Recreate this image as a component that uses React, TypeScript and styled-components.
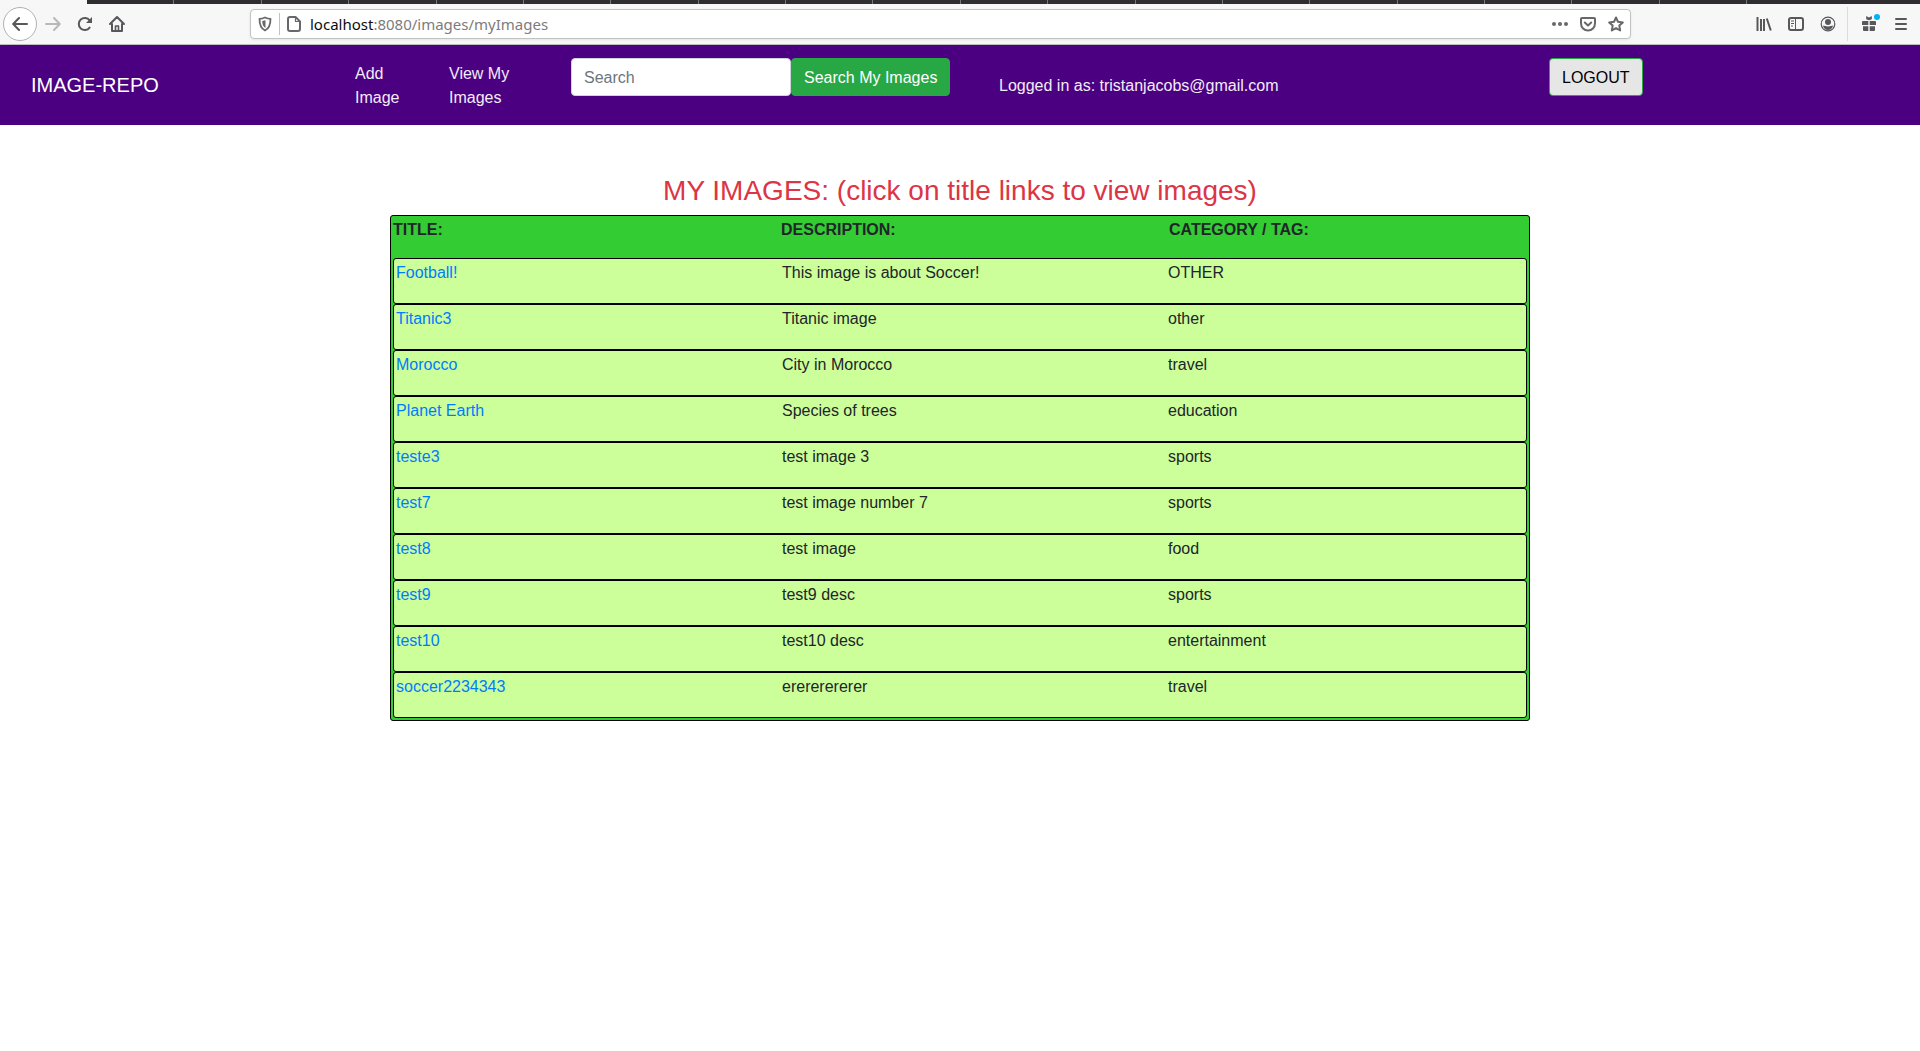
import React from "react";
import styled, { createGlobalStyle } from "styled-components";

const GlobalStyle = createGlobalStyle`
  *, *::before, *::after { box-sizing: border-box; }
  body {
    margin: 0;
    background: #fff;
    color: #212529;
    font: 400 16px/24px "Liberation Sans", Arial, sans-serif;
  }
`;

/* ---------- browser chrome ---------- */

const TabStrip = styled.div`
  display: flex;
  height: 4px;
  padding-right: 9%;
  background: #2f2d2f;
`;

const ActiveTab = styled.span`
  flex: 0 0 87px;
  background: #f7f7f8;
`;

const BackgroundTab = styled.span`
  flex: 1;
  border-right: 1px solid #77767a;
`;

const Toolbar = styled.div`
  display: flex;
  align-items: center;
  height: 41px;
  padding-left: 3px;
  padding-right: 3px;
  background: #f7f7f8;
  border-bottom: 1px solid #bdbdbd;
`;

const ToolButton = styled.button<{ $faded?: boolean }>`
  position: relative;
  display: grid;
  place-items: center;
  flex: none;
  width: 32px;
  height: 32px;
  padding: 0;
  border: 0;
  background: none;
  color: ${(p) => (p.$faded ? "#b9b9ba" : "#58585a")};
`;

const BackButton = styled(ToolButton)`
  width: 34px;
  height: 34px;
  border: 1px solid #b1b1b3;
  border-radius: 50%;
  background: #fff;
`;

const NotificationDot = styled.span`
  position: absolute;
  top: 6px;
  right: 5px;
  width: 6px;
  height: 6px;
  border-radius: 50%;
  background: #00b3f4;
`;

const AddressBar = styled.div`
  display: flex;
  align-items: center;
  flex: 1;
  height: 30px;
  margin-left: 117px;
  margin-right: 117px;
  border: 1px solid #c2c2c3;
  border-radius: 4px;
  background: #fff;
  box-shadow: 0 1px 3px rgba(0, 0, 0, 0.08);
`;

const BarButton = styled(ToolButton)`
  width: 28px;
  height: 28px;
  color: #68686a;
`;

const Divider = styled.span<{ $tall?: boolean }>`
  flex: none;
  width: 1px;
  height: ${(p) => (p.$tall ? 34 : 22)}px;
  margin: ${(p) => (p.$tall ? "0 5px 0 3px" : "0")};
  background: ${(p) => (p.$tall ? "#dcdcdd" : "#c2c2c3")};
`;

const Url = styled.span`
  flex: 1;
  margin-left: 2px;
  color: #7c7c7d;
  font: 400 15px/24px "Noto Sans", "Open Sans", sans-serif;
`;

const Host = styled.span`
  color: #0c0c0d;
`;

/* ---------- site header ---------- */

const Navbar = styled.nav`
  display: grid;
  grid-template-columns: 324fr 216fr 428fr 550fr 371fr;
  align-items: center;
  padding: 8px 0 8px 31px;
  background: #4b0082;
  color: #f2ecf7;
`;

const Brand = styled.a`
  color: #fff;
  font-size: 20px;
  line-height: 30px;
  text-decoration: none;
`;

const NavLinks = styled.ul`
  display: flex;
  gap: 30px;
  margin: 0;
  padding: 0;
  list-style: none;
`;

const NavLink = styled.a`
  display: block;
  width: 64px;
  padding: 9px 0 7px;
  color: inherit;
  text-decoration: none;
`;

const SearchForm = styled.form`
  display: flex;
  margin-bottom: 16px;
`;

const SearchInput = styled.input`
  width: 220px;
  height: 38px;
  padding: 7px 12px 5px;
  border: 1px solid #ced4da;
  border-radius: 4px;
  background: #fff;
  color: #495057;
  font: inherit;

  &::placeholder {
    color: #6c757d;
    opacity: 1;
  }
`;

const Button = styled.button<{ $light?: boolean }>`
  height: 38px;
  padding: 7px 12px 5px;
  border: 1px solid #28a745;
  border-radius: 4px;
  background: ${(p) => (p.$light ? "#e6e6e6" : "#28a745")};
  color: ${(p) => (p.$light ? "#000" : "#fff")};
  font: inherit;
  white-space: nowrap;
`;

const LogoutForm = styled.form`
  margin-bottom: 16px;
`;

const LoggedIn = styled.span`
  padding-top: 2px;
`;

/* ---------- image list ---------- */

const Main = styled.main`
  max-width: 1140px;
  margin: 0 auto;
  padding-top: 50px;
`;

const Heading = styled.h3`
  margin: 0 0 8px;
  color: #dc3545;
  font-size: 28px;
  font-weight: 400;
  line-height: 32px;
  text-align: center;
`;

const ImageTable = styled.table`
  display: block;
  padding: 2px;
  border: 1px solid #000;
  border-radius: 3px;
  background: #33cc33;

  thead,
  tbody {
    display: block;
  }
`;

const HeadRow = styled.tr`
  display: grid;
  grid-template-columns: repeat(3, 1fr);
  column-gap: 30px;
`;

const ImageRow = styled(HeadRow)`
  padding: 2px;
  border: 1px solid #000;
  border-radius: 3px;
  background: #ccff99;
`;

const HeadCell = styled.th`
  padding: 0 0 16px;
  text-align: left;
`;

const Cell = styled.td`
  padding: 0 0 16px;
`;

const TitleLink = styled.a`
  color: #007bff;
  text-decoration: none;
`;

/* ---------- icons ---------- */

type IconProps = { children: React.ReactNode; size?: number };

const Icon = ({ children, size = 16 }: IconProps) => (
  <svg
    width={size}
    height={size}
    viewBox="0 0 16 16"
    fill="none"
    stroke="currentColor"
    strokeWidth="2"
    strokeLinecap="round"
    strokeLinejoin="round"
    aria-hidden="true"
  >
    {children}
  </svg>
);

const BackIcon = () => (
  <Icon>
    <path d="M15 8H1.5M7 2 1.2 8 7 14" />
  </Icon>
);

const ForwardIcon = () => (
  <Icon>
    <path d="M1 8h13.5M9 2l5.8 6L9 14" />
  </Icon>
);

const ReloadIcon = () => (
  <Icon>
    <path d="M12.6 11.6A6 6 0 1 1 12.6 4.4" />
    <path d="M15 1v6H9z" fill="currentColor" stroke="none" />
  </Icon>
);

const HomeIcon = () => (
  <Icon>
    <path d="M1 8l7-7 7 7M3 8v7h10V8" />
    <path d="M6.5 15v-5h3v5" strokeWidth="1.6" />
  </Icon>
);

const ShieldIcon = () => (
  <Icon>
    <path d="M8 1.5c2 1 3.700 1.300 5.500 1.300 0 6.200-1 9.700-5.500 11.700-4.500-2-5.500-5.500-5.500-11.700C4.300 2.800 6 2.500 8 1.500z" strokeWidth="1.800" />
    <path d="M8.500 4.300v7.700C6 10.500 5.300 8.500 5.200 5z" fill="currentColor" stroke="none" />
  </Icon>
);

const PageIcon = () => (
  <Icon>
    <path d="M4 1h5.500L14 5.500V13a2 2 0 0 1-2 2H4a2 2 0 0 1-2-2V3a2 2 0 0 1 2-2z" />
    <path d="M9.500 1v4.500H14" strokeWidth="1.200" />
  </Icon>
);

const DotsIcon = () => (
  <Icon>
    <g fill="currentColor" stroke="none">
      <circle cx="2" cy="8" r="2" />
      <circle cx="8" cy="8" r="2" />
      <circle cx="14" cy="8" r="2" />
    </g>
  </Icon>
);

const PocketIcon = () => (
  <Icon>
    <path d="M2 2h12a1 1 0 0 1 1 1v4.500a7 7 0 0 1-14 0V3a1 1 0 0 1 1-1z" />
    <path d="M4.800 6.500 8 9.500l3.200-3" />
  </Icon>
);

const StarIcon = () => (
  <Icon>
    <path d="M8 1.500l2 4.300 4.800.6-3.500 3.200.9 4.900L8 12.100l-4.200 2.400.9-4.900L1.200 6.400 6 5.800z" />
  </Icon>
);

const LibraryIcon = () => (
  <Icon>
    <path d="M1.500 1v14M5 3v12M8 3v12M10.800 2.500l4 12" strokeLinecap="butt" />
  </Icon>
);

const SidebarIcon = () => (
  <Icon>
    <rect x="1" y="2" width="14" height="12" rx="2" />
    <path d="M7.500 2v12" strokeWidth="1" />
    <path d="M3 5h3M3 7.500h3M3 10h2" strokeWidth="1" strokeLinecap="butt" />
  </Icon>
);

const AccountIcon = () => (
  <Icon>
    <circle cx="8" cy="8" r="6.800" strokeWidth="1.200" />
    <g fill="currentColor" stroke="none">
      <circle cx="8" cy="6" r="3" />
      <path d="M3 9.500c1.500 0 2.500 1 5 1s3.500-1 5-1c-.4 2.800-2.500 4.500-5 4.500s-4.600-1.700-5-4.500z" />
    </g>
  </Icon>
);

const GiftIcon = () => (
  <Icon>
    <g fill="currentColor" stroke="none">
      <path d="M2 5h5.300v4H1V6a1 1 0 0 1 1-1zM8.700 5H14a1 1 0 0 1 1 1v3H8.700zM2 10.200h5.300V15H3a1 1 0 0 1-1-1zM8.700 10.200H14V14a1 1 0 0 1-1 1H8.700z" />
      <path d="M5.200 0 8 1.400 10.800 0v3.200L8 4.200 5.200 3.200z" />
    </g>
  </Icon>
);

const MenuIcon = () => (
  <Icon>
    <path d="M3 3h10M3 8h10M3 13h10" />
  </Icon>
);

/* ---------- data ---------- */

const images = [
  { title: "Football!", description: "This image is about Soccer!", category: "OTHER" },
  { title: "Titanic3", description: "Titanic image", category: "other" },
  { title: "Morocco", description: "City in Morocco", category: "travel" },
  { title: "Planet Earth", description: "Species of trees", category: "education" },
  { title: "teste3", description: "test image 3", category: "sports" },
  { title: "test7", description: "test image number 7", category: "sports" },
  { title: "test8", description: "test image", category: "food" },
  { title: "test9", description: "test9 desc", category: "sports" },
  { title: "test10", description: "test10 desc", category: "entertainment" },
  { title: "soccer2234343", description: "erererererer", category: "travel" },
];

const BACKGROUND_TABS = 19;

const BrowserChrome = () => (
  <header>
    <TabStrip>
      <ActiveTab />
      {Array.from({ length: BACKGROUND_TABS }, (_, i) => (
        <BackgroundTab key={i} />
      ))}
    </TabStrip>
    <Toolbar>
      <BackButton aria-label="Back"><BackIcon /></BackButton>
      <ToolButton aria-label="Forward" $faded><ForwardIcon /></ToolButton>
      <ToolButton aria-label="Reload"><ReloadIcon /></ToolButton>
      <ToolButton aria-label="Home"><HomeIcon /></ToolButton>
      <AddressBar>
        <BarButton aria-label="Tracking protection"><ShieldIcon /></BarButton>
        <Divider />
        <BarButton aria-label="Site information"><PageIcon /></BarButton>
        <Url><Host>localhost</Host>:8080/images/myImages</Url>
        <BarButton aria-label="Page actions"><DotsIcon /></BarButton>
        <BarButton aria-label="Save to Pocket"><PocketIcon /></BarButton>
        <BarButton aria-label="Bookmark this page"><StarIcon /></BarButton>
      </AddressBar>
      <ToolButton aria-label="Library"><LibraryIcon /></ToolButton>
      <ToolButton aria-label="Sidebars"><SidebarIcon /></ToolButton>
      <ToolButton aria-label="Account"><AccountIcon /></ToolButton>
      <Divider $tall />
      <ToolButton aria-label="What's new"><GiftIcon /><NotificationDot /></ToolButton>
      <ToolButton aria-label="Menu"><MenuIcon /></ToolButton>
    </Toolbar>
  </header>
);

const SiteNav = () => (
  <Navbar>
    <Brand href="#home">IMAGE-REPO</Brand>
    <NavLinks>
      <li><NavLink href="#add">Add Image</NavLink></li>
      <li><NavLink href="#images">View My Images</NavLink></li>
    </NavLinks>
    <SearchForm onSubmit={(e) => e.preventDefault()}>
      <SearchInput type="search" placeholder="Search" aria-label="Search" />
      <Button type="submit">Search My Images</Button>
    </SearchForm>
    <LoggedIn>Logged in as: tristanjacobs@gmail.com</LoggedIn>
    <LogoutForm onSubmit={(e) => e.preventDefault()}>
      <Button type="submit" $light>LOGOUT</Button>
    </LogoutForm>
  </Navbar>
);

export default function App() {
  return (
    <>
      <GlobalStyle />
      <BrowserChrome />
      <SiteNav />
      <Main>
        <Heading>MY IMAGES: (click on title links to view images)</Heading>
        <ImageTable>
          <thead>
            <HeadRow>
              <HeadCell scope="col">TITLE:</HeadCell>
              <HeadCell scope="col">DESCRIPTION:</HeadCell>
              <HeadCell scope="col">CATEGORY / TAG:</HeadCell>
            </HeadRow>
          </thead>
          <tbody>
            {images.map((image) => (
              <ImageRow key={image.title}>
                <Cell><TitleLink href={`#${image.title}`}>{image.title}</TitleLink></Cell>
                <Cell>{image.description}</Cell>
                <Cell>{image.category}</Cell>
              </ImageRow>
            ))}
          </tbody>
        </ImageTable>
      </Main>
    </>
  );
}
